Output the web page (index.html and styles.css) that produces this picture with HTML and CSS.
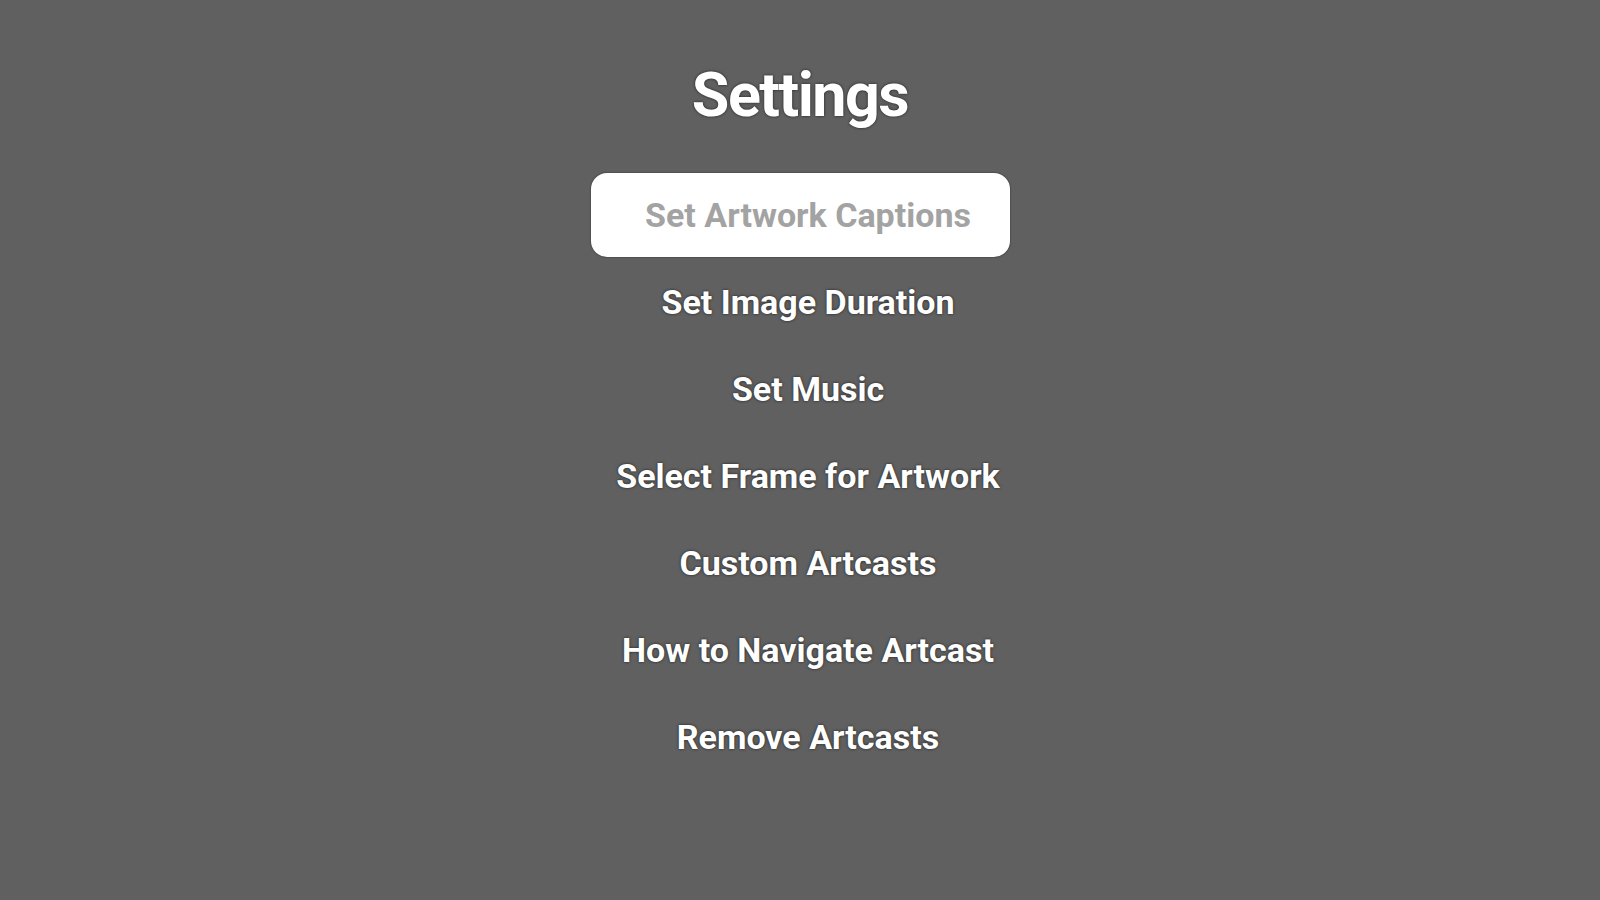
FILE: index.html
```html
<!DOCTYPE html>
<html>
<head>
<meta charset="utf-8">
<link rel="stylesheet" href="styles.css">
</head>
<body>
<main class="settings">
  <h1 class="title">Settings</h1>
  <ul class="menu">
    <li class="item active">Set Artwork Captions</li>
    <li class="item">Set Image Duration</li>
    <li class="item">Set Music</li>
    <li class="item">Select Frame for Artwork</li>
    <li class="item">Custom Artcasts</li>
    <li class="item">How to Navigate Artcast</li>
    <li class="item">Remove Artcasts</li>
  </ul>
</main>
</body>
</html>
```
FILE: styles.css
```css
html, body {
  margin: 0;
  padding: 0;
  width: 1600px;
  height: 900px;
  background: #606060;
  overflow: hidden;
}
.settings {
  display: flex;
  flex-direction: column;
  align-items: center;
  font-family: Roboto, "Liberation Sans", sans-serif;
  color: #ffffff;
}
.title {
  margin: 65px 0 0 0;
  font-size: 61px;
  line-height: 1;
  font-weight: 700;
  letter-spacing: -1.5px;
  text-shadow: 0 0 3px rgba(0,0,0,0.7);
}
.menu {
  list-style: none;
  margin: 47px 0 0 0;
  padding: 0;
  display: flex;
  flex-direction: column;
  align-items: center;
  gap: 3px;
}
.item {
  box-sizing: border-box;
  width: 419px;
  height: 84px;
  padding-left: 16px;
  display: flex;
  align-items: center;
  justify-content: center;
  font-size: 34px;
  font-weight: 700;
  text-shadow: 0 0 3px rgba(0,0,0,0.7);
}
.item.active {
  background: #ffffff;
  border-radius: 16px;
  color: #a3a3a3;
  text-shadow: none;
  box-shadow: 0 0 2px rgba(0,0,0,0.6);
}
```
